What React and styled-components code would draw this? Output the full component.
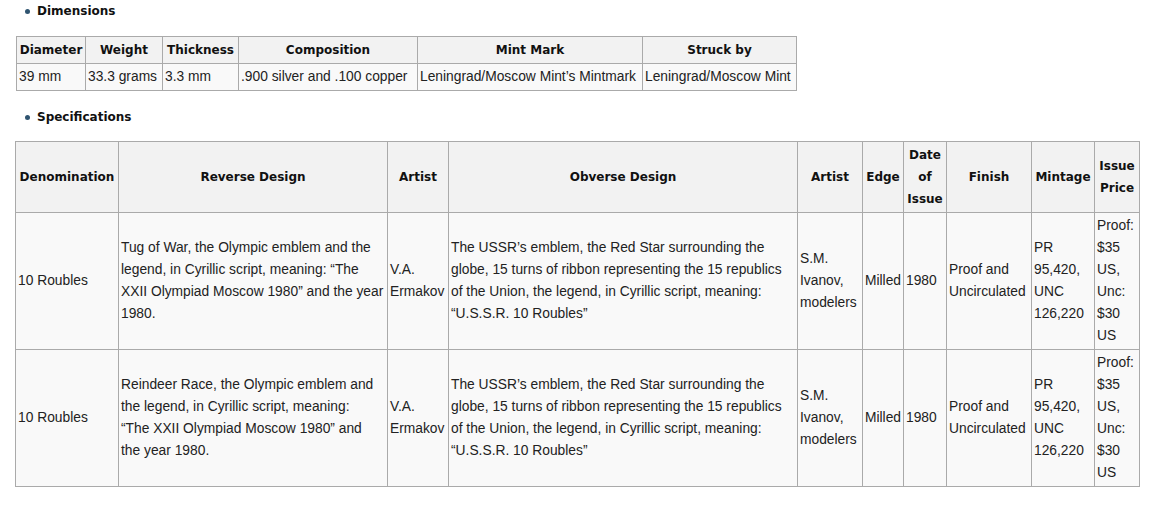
import React from 'react';
import styled, { createGlobalStyle } from 'styled-components';

const GlobalStyle = createGlobalStyle`
  body {
    margin: 0;
    background: #fff;
    font-family: "Liberation Sans", Arial, sans-serif;
    font-size: 13.8px;
    color: #222;
  }
`;

const Page = styled.div`
  padding: 0 0 0 15px;
`;

const Heading = styled.div`
  display: flex;
  align-items: center;
  height: 22px;
  padding-left: 10px;
  gap: 7px;
  font-family: "DejaVu Sans", Verdana, sans-serif;
  font-weight: bold;
  font-size: 12px;
  color: #111;
  margin: ${p => p.$top || 0}px 0 ${p => p.$bottom || 14}px 0;

  &::before {
    content: '';
    width: 5px;
    height: 5px;
    border-radius: 50%;
    background: #2f5470;
  }
`;

const Table = styled.table`
  border-collapse: collapse;
  table-layout: fixed;
  width: ${p => p.$width}px;
  margin-left: ${p => p.$shift || 0}px;
  background: #f9f9f9;
  line-height: 22px;

  th, td {
    border: 1px solid #aaa;
    padding: 2px 2px;
    vertical-align: middle;
  }
`;

const Th = styled.th`
  background: #f2f2f2;
  font-family: "DejaVu Sans", Verdana, sans-serif;
  font-size: 12px;
  font-weight: bold;
  color: #111;
  text-align: center;
`;

const Td = styled.td`
  text-align: left;
  color: #222;
  white-space: ${p => (p.$nowrap ? 'nowrap' : 'normal')};
  && {
    padding-right: ${p => p.$padRight || 2}px;
  }
`;

const dims = [
  ['Diameter', 69, '39 mm'],
  ['Weight', 77, '33.3 grams'],
  ['Thickness', 76, '3.3 mm'],
  ['Composition', 179, '.900 silver and .100 copper'],
  ['Mint Mark', 225, 'Leningrad/Moscow Mint\u2019s Mintmark'],
  ['Struck by', 154, 'Leningrad/Moscow Mint'],
];

const specCols = [
  ['Denomination', 103],
  ['Reverse Design', 269],
  ['Artist', 61],
  ['Obverse Design', 349],
  ['Artist', 65],
  ['Edge', 41],
  ['Date of Issue', 43],
  ['Finish', 85],
  ['Mintage', 63],
  ['Issue Price', 45],
];

const obverse =
  'The USSR\u2019s emblem, the Red Star surrounding the globe, 15 turns of ribbon representing the 15 republics of the Union, the legend, in Cyrillic script, meaning: \u201CU.S.S.R. 10 Roubles\u201D';

// pad keeps the wrapping of each reverse text as in the source page
const specRows = [
  { rev: 'Tug of War, the Olympic emblem and the legend, in Cyrillic script, meaning: \u201CThe XXII Olympiad Moscow 1980\u201D and the year 1980.', pad: 2 },
  { rev: 'Reindeer Race, the Olympic emblem and the legend, in Cyrillic script, meaning: \u201CThe XXII Olympiad Moscow 1980\u201D and the year 1980.', pad: 7 },
];

export default function App() {
  return (
    <Page>
      <GlobalStyle />
      <Heading>Dimensions</Heading>
      <Table $width={780} $shift={1}>
        <colgroup>
          {dims.map(([h, w]) => <col key={h} style={{ width: w }} />)}
        </colgroup>
        <thead>
          <tr>{dims.map(([h]) => <Th key={h}>{h}</Th>)}</tr>
        </thead>
        <tbody>
          <tr>{dims.map(([h, , v]) => <Td key={h} $nowrap>{v}</Td>)}</tr>
        </tbody>
      </Table>
      <Heading $top={15} $bottom={13}>Specifications</Heading>
      <Table $width={1124}>
        <colgroup>
          {specCols.map(([h, w], i) => <col key={i} style={{ width: w }} />)}
        </colgroup>
        <thead>
          <tr>{specCols.map(([h], i) => <Th key={i}>{h}</Th>)}</tr>
        </thead>
        <tbody>
          {specRows.map((row, i) => (
            <tr key={i}>
              <Td>10 Roubles</Td>
              <Td $padRight={row.pad}>{row.rev}</Td>
              <Td>V.A. Ermakov</Td>
              <Td>{obverse}</Td>
              <Td>S.M. Ivanov, modelers</Td>
              <Td>Milled</Td>
              <Td>1980</Td>
              <Td>Proof and Uncirculated</Td>
              <Td>PR 95,420, UNC 126,220</Td>
              <Td>Proof: $35 US, Unc: $30 US</Td>
            </tr>
          ))}
        </tbody>
      </Table>
    </Page>
  );
}
